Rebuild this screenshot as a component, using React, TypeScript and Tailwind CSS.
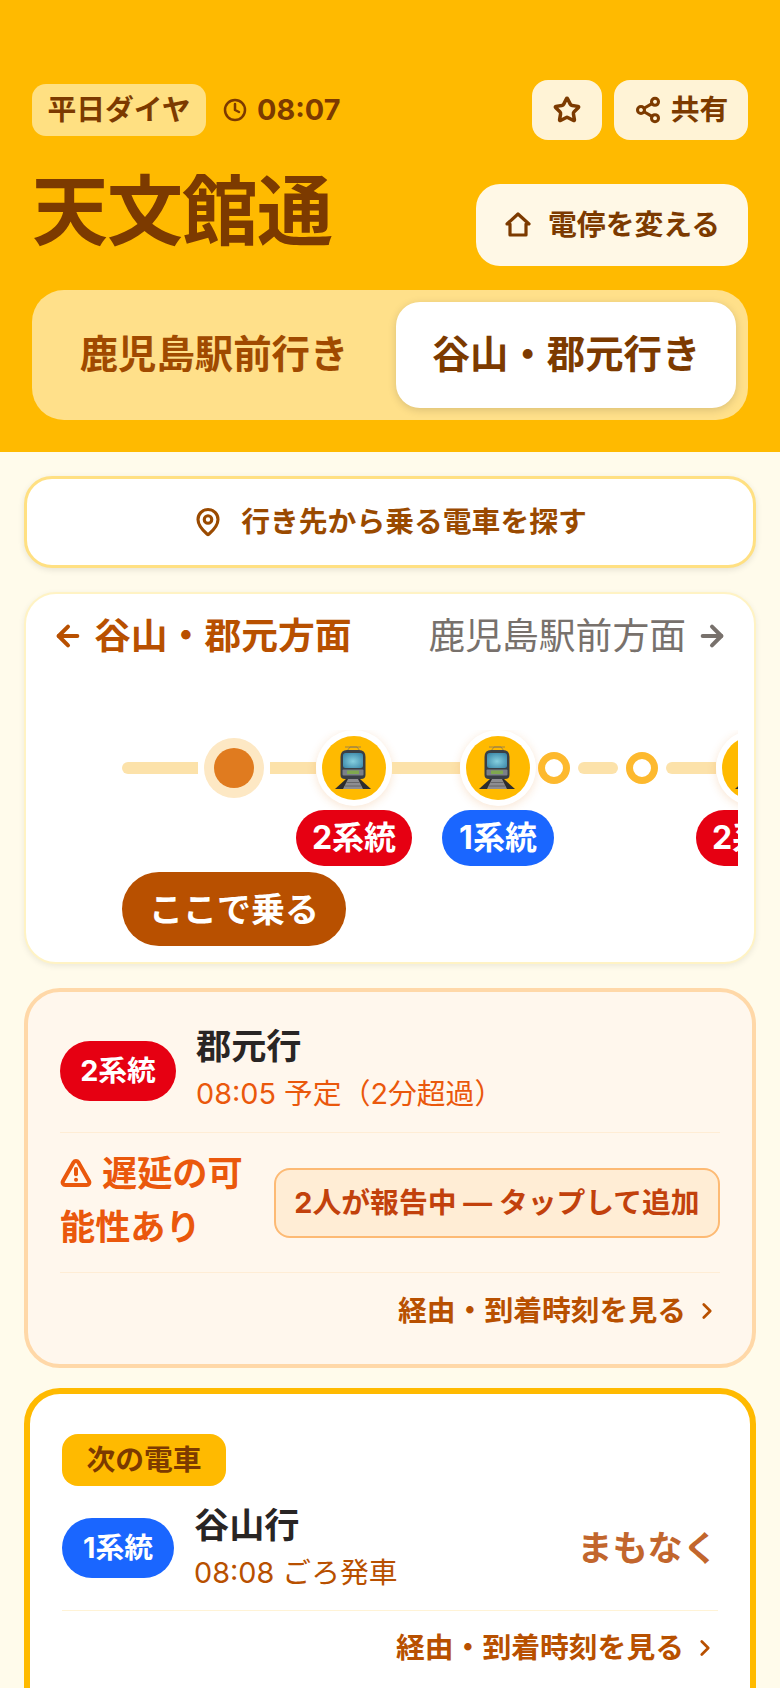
import React from 'react';
import { ArrowLeft, ArrowRight, ChevronRight, Clock, MapPin, Share2, Star, TriangleAlert } from 'lucide-react';

const Tram = () => (
  <svg viewBox="0 0 40 44" className="w-[40px] h-[44px] -ml-[3px]">
    <defs>
      <radialGradient id="glass" cx="0.5" cy="0.55" r="0.65">
        <stop offset="0" stopColor="#86d0df" />
        <stop offset="1" stopColor="#3b87a8" />
      </radialGradient>
    </defs>
    <path d="M14 5 L17 1 H24 L27 5" fill="none" stroke="#8a7a55" strokeWidth="0.8" />
    <path d="M12 1 H28" stroke="#8a7a55" strokeWidth="0.8" />
    <path d="M7.5 11 Q7.5 4 14 4 H26 Q32.5 4 32.5 11 V29 Q32.5 33 28 33 H12 Q7.5 33 7.5 29 Z" fill="#3a3f45" />
    <rect x="10" y="7" width="20" height="15" rx="2.5" fill="url(#glass)" />
    <rect x="9.5" y="23.5" width="21" height="6" rx="1" fill="#7b8088" />
    <rect x="14" y="24.5" width="12" height="3.5" rx="0.5" fill="#7fa84f" />
    <path d="M13 33 H27 L38 43 H2 Z" fill="#2c2c2e" />
    <path d="M15 33 H25 L30 43 H10 Z" fill="#8d8d90" />
    <path d="M13.5 36.5 H26.5 M12 40 H28" stroke="#5c5c5e" strokeWidth="0.8" />
  </svg>
);

const TrainStop = () => (
  <div className="w-[76px] h-[76px] shrink-0 rounded-full bg-white flex items-center justify-center shadow-[0_2px_10px_rgba(224,123,31,0.2)]">
    <div className="w-[64px] h-[64px] rounded-full bg-[#ffba00] flex items-center justify-center">
      <Tram />
    </div>
  </div>
);

const Ring = () => <div className="w-[32px] h-[32px] shrink-0 rounded-full border-[7px] border-[#fdb92e] bg-white" />;

const Track = ({ w }: { w: string }) => <div className={`h-[12px] shrink-0 bg-[#fce2aa] ${w}`} />;

const DetailLink = () => (
  <div className="flex items-center justify-end gap-[8px] text-[28.8px] leading-[40px] font-bold text-[#b85000]">
    経由・到着時刻を見る
    <ChevronRight size={26} strokeWidth={2.5} />
  </div>
);

export default function App() {
  return (
    <div className="h-[1688px] overflow-hidden bg-[#fffbeb] font-[Inter,'Noto_Sans_CJK_JP',sans-serif]">
      {/* header */}
      <div className="bg-[#ffba00] h-[452px] px-8 pt-[80px] text-[#7c3a00]">
        <div className="flex items-center justify-between h-[60px]">
          <div className="flex items-center">
            <div className="w-[174px] h-[52px] rounded-[14px] bg-[#ffe082] flex items-center justify-center text-[28.8px] font-bold">
              平日ダイヤ
            </div>
            <Clock size={24} strokeWidth={2.5} className="ml-[17px]" />
            <span className="ml-[10px] text-[28.8px] font-bold">08:07</span>
          </div>
          <div className="flex gap-3">
            <div className="w-[70px] h-[60px] rounded-[16px] bg-[#fff3d6] flex items-center justify-center">
              <Star size={28} strokeWidth={3} />
            </div>
            <div className="w-[134px] h-[60px] rounded-[16px] bg-[#fff3d6] flex items-center justify-center gap-[9px] text-[28.8px] font-bold">
              <Share2 size={28} strokeWidth={2.6} />
              共有
            </div>
          </div>
        </div>
        <div className="flex items-start justify-between mt-[44px] h-[82px]">
          <div className="-mt-[20px] text-[76px] leading-[94px] font-bold tracking-[-1px] text-[#7c3a00]">天文館通</div>
          <div className="w-[272px] h-[82px] rounded-[24px] bg-[#fff8e6] flex items-center justify-center gap-[16px] text-[28.8px] font-bold">
            <svg viewBox="0 0 28 28" className="w-[28px] h-[28px]" fill="none" stroke="currentColor" strokeWidth="3.2" strokeLinejoin="round">
              <path d="M3 13 L14 3 L25 13 H22 V24 H6 V13 Z" />
            </svg>
            電停を変える
          </div>
        </div>
        <div className="mt-[24px] h-[130px] rounded-[32px] bg-[#ffe08a] p-3 flex gap-3">
          <div className="flex-1 rounded-[24px] flex items-center justify-center text-[38.4px] font-bold text-[#a04a00]">
            鹿児島駅前行き
          </div>
          <div className="flex-1 rounded-[24px] bg-white shadow-[0_2px_8px_rgba(0,0,0,0.15)] flex items-center justify-center text-[38.4px] font-bold">
            谷山・郡元行き
          </div>
        </div>
      </div>

      <div className="px-6 pt-6">
        {/* destination search */}
        <div className="h-[92px] rounded-[28px] border-[3px] border-[#ffe082] bg-white shadow-[0_2px_6px_rgba(0,0,0,0.1)] flex items-center justify-center gap-[18px] text-[28.8px] font-bold text-[#9a4a00]">
          <MapPin size={30} strokeWidth={2.5} />
          行き先から乗る電車を探す
        </div>

        {/* route line */}
        <div className="mt-6 h-[372px] rounded-[32px] border-2 border-[#fff3c4] bg-white shadow-[0_2px_6px_rgba(0,0,0,0.08)] pt-[17px]">
          <div className="flex items-center justify-between px-[26px] h-[50px]">
            <div className="flex items-center gap-[10px] text-[36.8px] font-bold text-[#b85000]">
              <ArrowLeft size={32} strokeWidth={3} />
              谷山・郡元方面
            </div>
            <div className="flex items-center gap-[10px] text-[36.8px] text-[#78716c]">
              鹿児島駅前方面
              <ArrowRight size={32} strokeWidth={3} />
            </div>
          </div>
          <div className="mt-[69px] mx-[16px] overflow-hidden">
            <div className="flex items-center pl-[80px] h-[76px]">
              <Track w="w-[76px] rounded-l-full" />
              <div className="mx-[6px] w-[60px] h-[60px] shrink-0 rounded-full bg-[#fde8c4] flex items-center justify-center">
                <div className="w-[40px] h-[40px] rounded-full bg-[#e07b1f]" />
              </div>
              <Track w="w-[46px]" />
              <TrainStop />
              <Track w="w-[68px]" />
              <TrainStop />
              <div className="ml-[2px]"><Ring /></div>
              <Track w="w-[40px] mx-[8px] rounded-full" />
              <Ring />
              <Track w="w-[50px] ml-[8px] rounded-l-full" />
              <TrainStop />
            </div>
            <div className="flex mt-[4px] text-[32px] font-bold text-white">
              <div className="ml-[254px] w-[116px] h-[56px] shrink-0 rounded-full bg-[#e60012] flex items-center justify-center">2系統</div>
              <div className="ml-[30px] w-[112px] h-[56px] shrink-0 rounded-full bg-[#1a66ff] flex items-center justify-center">1系統</div>
              <div className="ml-[142px] w-[116px] h-[56px] shrink-0 rounded-full bg-[#e60012] flex items-center justify-center">2系統</div>
            </div>
            <div className="ml-[80px] mt-[6px] w-[224px] h-[74px] rounded-full bg-[#b85000] flex items-center justify-center text-[34px] font-bold text-white">
              ここで乗る
            </div>
          </div>
        </div>

        {/* delayed train */}
        <div className="mt-6 h-[380px] rounded-[36px] border-4 border-[#ffd8a8] bg-[#fff7ed] px-[32px] pt-[24px]">
          <div className="flex items-center gap-[20px] h-[117px] border-b border-[#ffedd5] pb-[6px]">
            <div className="w-[116px] h-[60px] rounded-full bg-[#e60012] flex items-center justify-center text-[28.8px] font-bold text-white shrink-0">2系統</div>
            <div className="pb-[4px]">
              <div className="text-[35.2px] leading-[50px] font-bold text-[#292524]">郡元行</div>
              <div className="text-[28.8px] leading-[46px] text-[#ea580c]">08:05 予定（2分超過）</div>
            </div>
          </div>
          <div className="flex items-center justify-between h-[140px] border-b border-[#ffedd5]">
            <div className="w-[190px] pb-[6px] text-[35.2px] leading-[54px] font-bold text-[#ea580c]">
              <TriangleAlert size={32} strokeWidth={3} className="inline-block mr-[10px] -mt-[6px]" />
              遅延の可能性あり
            </div>
            <div className="w-[446px] h-[70px] rounded-[16px] border-2 border-[#fdba74] bg-[#ffedd5] flex items-center justify-center text-[28.8px] font-bold text-[#c2410c]">
              2人が報告中 — タップして追加
            </div>
          </div>
          <div className="pt-[18px]">
            <DetailLink />
          </div>
        </div>

        {/* next train */}
        <div className="mt-5 h-[400px] rounded-[36px] border-[6px] border-[#ffba00] bg-white px-[32px] pt-[40px]">
          <div className="w-[164px] h-[52px] rounded-[16px] bg-[#ffba00] flex items-center justify-center text-[28.8px] font-bold text-[#7c3a00]">
            次の電車
          </div>
          <div className="flex items-center gap-[20px] mt-[8px] h-[108px]">
            <div className="w-[112px] h-[60px] rounded-full bg-[#1a66ff] flex items-center justify-center text-[28.8px] font-bold text-white shrink-0">1系統</div>
            <div className="flex-1">
              <div className="text-[35.2px] leading-[50px] font-bold text-[#292524]">谷山行</div>
              <div className="text-[28.8px] leading-[46px] text-[#b85000]">08:08 ごろ発車</div>
            </div>
            <div className="text-[35.2px] font-bold text-[#c2662d]">まもなく</div>
          </div>
          <div className="mt-[8px] pt-[17px] border-t border-[#fff3d6]">
            <DetailLink />
          </div>
        </div>
      </div>
    </div>
  );
}
